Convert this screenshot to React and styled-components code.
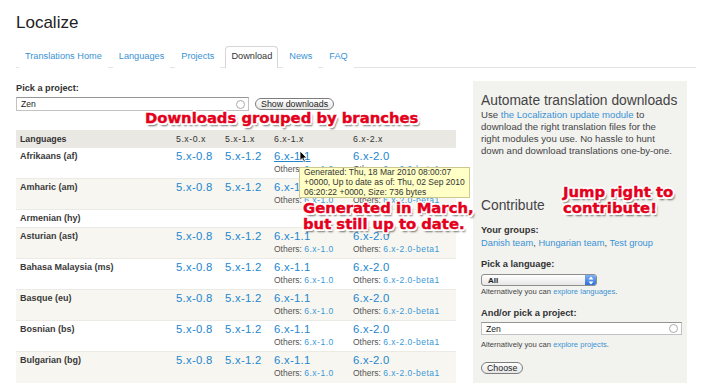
import React from "react";
import styled, { createGlobalStyle } from "styled-components";

const GlobalStyle = createGlobalStyle`
  body {
    margin: 0;
    background: #fff;
    font-family: "Liberation Sans", Arial, sans-serif;
    color: #333;
  }
`;

const tabs = ["Translations Home", "Languages", "Projects", "Download", "News", "FAQ"];

const languages = [
  { name: "Afrikaans (af)", hasFiles: true, hover: true },
  { name: "Amharic (am)", hasFiles: true },
  { name: "Armenian (hy)", hasFiles: false },
  { name: "Asturian (ast)", hasFiles: true },
  { name: "Bahasa Malaysia (ms)", hasFiles: true },
  { name: "Basque (eu)", hasFiles: true },
  { name: "Bosnian (bs)", hasFiles: true },
  { name: "Bulgarian (bg)", hasFiles: true },
];

const App = () => {
  return (
    <Page>
      <GlobalStyle />
      <Title>Localize</Title>
      <Tabs>
        {tabs.map((t) => (
          <Tab key={t} $active={t === "Download"}>
            {t}
          </Tab>
        ))}
      </Tabs>

      <Main>
        <LeftColumn>
          <Label>Pick a project:</Label>
          <PickRow>
            <SearchInput>
              <span>Zen</span>
              <Spinner />
            </SearchInput>
            <PillButton>Show downloads</PillButton>
          </PickRow>

          <Table>
            <colgroup>
              <col style={{ width: 156 }} />
              <col style={{ width: 49 }} />
              <col style={{ width: 49 }} />
              <col style={{ width: 79 }} />
              <col />
            </colgroup>
            <thead>
              <tr>
                <Th>Languages</Th>
                <Th>5.x-0.x</Th>
                <Th>5.x-1.x</Th>
                <Th>6.x-1.x</Th>
                <Th>6.x-2.x</Th>
              </tr>
            </thead>
            <tbody>
              {languages.map((lang, i) => (
                <Row key={lang.name} $odd={i % 2 === 1} $short={!lang.hasFiles}>
                  <LangCell>{lang.name}</LangCell>
                  {lang.hasFiles ? (
                    <>
                      <Td>
                        <Version>5.x-0.8</Version>
                      </Td>
                      <Td>
                        <Version>5.x-1.2</Version>
                      </Td>
                      <Td>
                        <Version $hover={lang.hover}>6.x-1.1</Version>
                        <Others>
                          Others: <a>6.x-1.0</a>
                        </Others>
                      </Td>
                      <Td>
                        <Version>6.x-2.0</Version>
                        <Others>
                          Others: <a>6.x-2.0-beta1</a>
                        </Others>
                      </Td>
                    </>
                  ) : (
                    <Td colSpan={4} />
                  )}
                </Row>
              ))}
            </tbody>
          </Table>
        </LeftColumn>

        <Sidebar>
          <SideTitle>Automate translation downloads</SideTitle>
          <SideText>
            Use <a>the Localization update module</a> to
            <br />
            download the right translation files for the
            <br />
            right modules you use. No hassle to hunt
            <br />
            down and download translations one-by-one.
          </SideText>

          <SideTitle $contribute>Contribute</SideTitle>
          <SideLabel>Your groups:</SideLabel>
          <Groups>
            <a>Danish team</a>, <a>Hungarian team</a>, <a>Test group</a>
          </Groups>

          <SideLabel $gap={8}>Pick a language:</SideLabel>
          <Select>
            <span>All</span>
            <SelectArrows>
              <svg width="6" height="9" viewBox="0 0 6 9">
                <path d="M3 0.5 L5.5 3.5 H0.5 Z M3 8.5 L5.5 5.5 H0.5 Z" fill="#fff" />
              </svg>
            </SelectArrows>
          </Select>
          <Hint $gap={1}>
            Alternatively you can <a>explore languages</a>.
          </Hint>

          <SideLabel $gap={10}>And/or pick a project:</SideLabel>
          <SearchInput $wide>
            <span>Zen</span>
            <Spinner />
          </SearchInput>
          <Hint $gap={5}>
            Alternatively you can <a>explore projects</a>.
          </Hint>
          <PillButton $choose>Choose</PillButton>
        </Sidebar>
      </Main>

      <Tooltip>
        Generated: Thu, 18 Mar 2010 08:00:07
        <br />
        +0000, Up to date as of: Thu, 02 Sep 2010
        <br />
        06:20:22 +0000, Size: 736 bytes
      </Tooltip>
      <Cursor width="9" height="13" viewBox="0 0 9 13">
        <path d="M1 1 L1 10.5 L3.3 8.4 L5 12.2 L6.4 11.6 L4.8 7.9 L7.8 7.9 Z" fill="#000" stroke="#fff" strokeWidth="0.8" />
      </Cursor>

      <Callout $x={145} $y={110}>Downloads grouped by branches</Callout>
      <Callout $x={303} $y={200}>
        Generated in March,
        <br />
        but still up to date.
      </Callout>
      <Callout $x={563} $y={184}>
        Jump right to
        <br />
        contribute!
      </Callout>
    </Page>
  );
};

export default App;

const Page = styled.div`
  position: relative;
  width: 712px;
  height: 383px;
  overflow: hidden;
  padding: 0 16px;
  box-sizing: border-box;
`;

const Title = styled.h1`
  margin: 0;
  padding-top: 13px;
  height: 45px;
  box-sizing: border-box;
  font-weight: normal;
  font-size: 17px;
  line-height: 19px;
  color: #222;
`;

const Tabs = styled.div`
  display: flex;
  align-items: flex-end;
  gap: 5px;
  height: 22px;
  padding-left: 3px;
  border-bottom: 1px solid #e4e4e4;
`;

const Tab = styled.div`
  font-size: 9.2px;
  line-height: 12px;
  padding: 3px 5px 6px;
  color: ${(p) => (p.$active ? "#333" : "#3a92d4")};
  border: 1px solid ${(p) => (p.$active ? "#d6d6d6" : "transparent")};
  border-bottom: none;
  border-radius: 4px 4px 0 0;
  background: #fff;
  margin-bottom: -1px;
`;

const Main = styled.div`
  display: flex;
  gap: 17px;
  margin-top: 13px;
`;

const LeftColumn = styled.div`
  width: 440px;
  padding-top: 1px;
`;

const Label = styled.div`
  font-size: 9.2px;
  font-weight: bold;
  color: #333;
  line-height: 12px;
`;

const PickRow = styled.div`
  display: flex;
  align-items: center;
  gap: 6px;
  margin-top: 3px;
`;

const SearchInput = styled.div`
  width: ${(p) => (p.$wide ? "201px" : "233px")};
  height: ${(p) => (p.$wide ? "13px" : "14px")};
  margin-top: ${(p) => (p.$wide ? "2px" : "0")};
  box-sizing: border-box;
  border: 1px solid #c2c2c2;
  border-top-color: #959595;
  background: #fff;
  display: flex;
  align-items: center;
  justify-content: space-between;
  padding: 0 3px 0 4px;
  font-size: 8.6px;
  color: #222;
`;

const Spinner = styled.span`
  width: 7px;
  height: 7px;
  border-radius: 50%;
  border: 1px solid #aaa;
`;

const PillButton = styled.div`
  display: inline-block;
  height: 12px;
  line-height: 10px;
  box-sizing: border-box;
  padding: 0 5px;
  border: 1px solid #7d7d7d;
  border-radius: 7px;
  background: linear-gradient(#fff, #e6e6e6);
  font-size: ${(p) => (p.$choose ? "8.8px" : "8.9px")};
  color: #222;
  margin-top: ${(p) => (p.$choose ? "12px" : "0")};
`;

const Table = styled.table`
  width: 440px;
  border-collapse: collapse;
  margin-top: 19px;
  table-layout: fixed;
`;

const Th = styled.th`
  background: #e9e8e2;
  text-align: left;
  font-size: 8.8px;
  font-weight: bold;
  color: #333;
  height: 17px;
  padding: 0 0 0 4px;
  &:not(:first-child) {
    font-weight: normal;
    color: #333;
    letter-spacing: 0.5px;
  }
`;

const Row = styled.tr`
  background: ${(p) => (p.$odd ? "#f7f6f0" : "#fff")};
  height: ${(p) => (p.$short ? "18px" : "31px")};
  border-top: 1px solid #ebeae4;
`;

const Td = styled.td`
  vertical-align: top;
  padding: 2px 0 0 4px;
`;

const LangCell = styled(Td)`
  font-size: 9px;
  line-height: 11px;
  font-weight: bold;
  color: #3a3a3a;
  padding-top: 3px;
`;

const Version = styled.a`
  display: block;
  font-size: 11.3px;
  letter-spacing: 0.3px;
  line-height: 12px;
  color: #2386d0;
  text-decoration: ${(p) => (p.$hover ? "underline" : "none")};
`;

const Others = styled.div`
  font-size: 8.5px;
  color: #555;
  line-height: 11px;
  margin-top: 1.5px;
  a {
    color: #3b98d8;
    letter-spacing: 0.5px;
  }
`;

const Sidebar = styled.div`
  width: 214px;
  height: 310px;
  background: #f2f2ef;
  box-sizing: border-box;
  padding: 12px 8px;
  color: #444;
  a {
    color: #3a92d4;
  }
`;

const SideTitle = styled.h2`
  margin: ${(p) => (p.$contribute ? "41px 0 10px" : "0")};
  font-weight: normal;
  font-size: 13.8px;
  line-height: 16px;
  white-space: nowrap;
  color: #444;
`;

const SideText = styled.p`
  margin: 0;
  line-height: 12px;
  font-size: 9.6px;
  white-space: nowrap;
`;

const SideLabel = styled.div`
  font-weight: bold;
  font-size: 9.3px;
  color: #333;
  line-height: 13px;
  margin-top: ${(p) => p.$gap || 0}px;
`;

const Groups = styled.div`
  line-height: 13px;
  font-size: 9.3px;
`;

const Select = styled.div`
  width: 116px;
  height: 12px;
  margin-top: 3px;
  box-sizing: border-box;
  border: 1px solid #8e8e8e;
  border-radius: 3px;
  background: linear-gradient(#fff, #e6e6e6);
  display: flex;
  align-items: center;
  justify-content: space-between;
  font-size: 8px;
  font-weight: bold;
  color: #222;
  padding-left: 6px;
  overflow: hidden;
`;

const SelectArrows = styled.span`
  width: 11px;
  height: 10px;
  background: linear-gradient(#7fb1f2, #2f6fd8);
  display: flex;
  align-items: center;
  justify-content: center;
`;

const Hint = styled.div`
  font-size: 7.6px;
  color: #444;
  line-height: 10px;
  margin-top: ${(p) => p.$gap}px;
`;

const Tooltip = styled.div`
  position: absolute;
  left: 299px;
  top: 167px;
  width: 171px;
  height: 31px;
  box-sizing: border-box;
  padding: 0 4px;
  background: #ffffc6;
  border: 1px solid #cdc88f;
  font-size: 8.5px;
  line-height: 9.8px;
  white-space: nowrap;
  color: #333;
  z-index: 2;
`;

const Cursor = styled.svg`
  position: absolute;
  left: 299px;
  top: 150px;
  z-index: 3;
`;

const Callout = styled.div`
  position: absolute;
  left: ${(p) => p.$x}px;
  top: ${(p) => p.$y}px;
  font-family: "DejaVu Sans", sans-serif;
  font-weight: bold;
  font-size: 14.8px;
  line-height: 16px;
  color: #e4001b;
  -webkit-text-stroke: 0.4px #e4001b;
  white-space: nowrap;
  z-index: 4;
  text-shadow: 2px 0 0 #fff, -2px 0 0 #fff, 0 2px 0 #fff, 0 -2px 0 #fff,
    1.5px 1.5px 0 #fff, -1.5px -1.5px 0 #fff, 1.5px -1.5px 0 #fff,
    -1.5px 1.5px 0 #fff, 2px 2.5px 2px rgba(0, 0, 0, 0.6);
`;
